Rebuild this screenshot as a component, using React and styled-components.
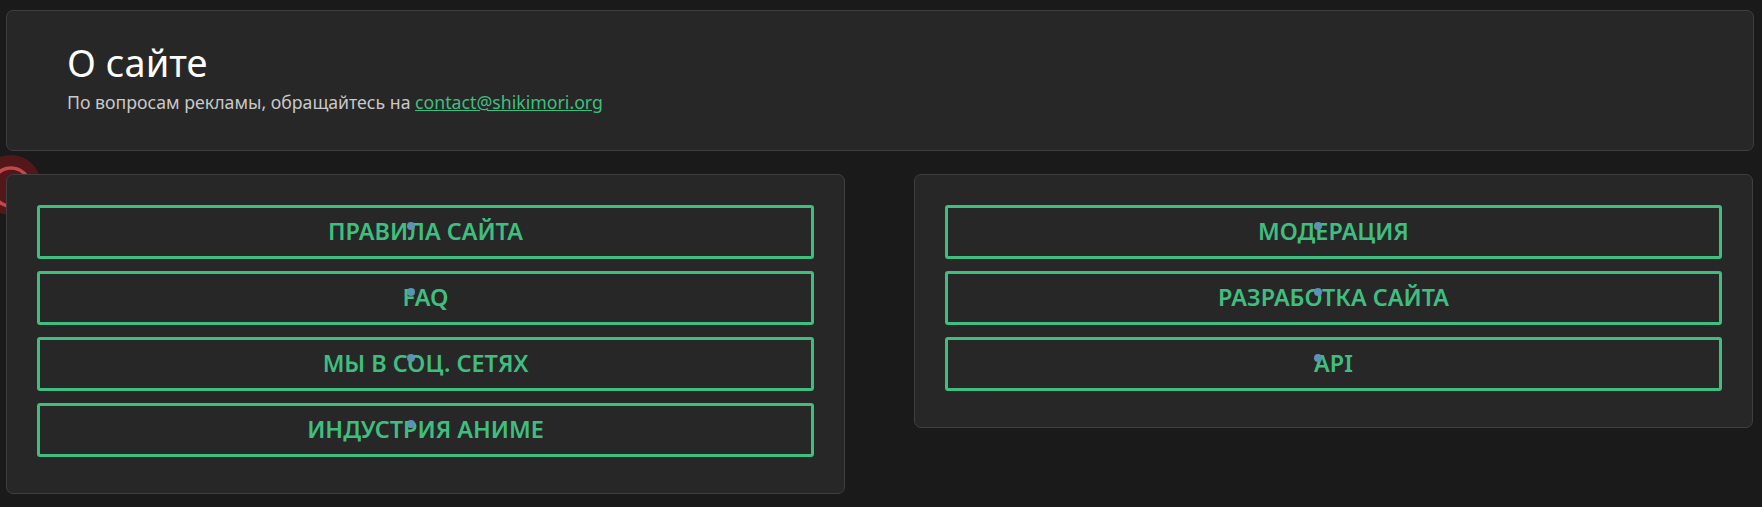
import styled, { createGlobalStyle } from "styled-components";

const GlobalStyle = createGlobalStyle`
  html, body {
    margin: 0;
    padding: 0;
    height: 100%;
    background-color: #1a1a1a;
    overflow: hidden;
  }
  body {
    font-family: "Noto Sans", "Open Sans", sans-serif;
  }
`;

const Page = styled.div`
  position: relative;
  width: 1762px;
  height: 507px;
  padding: 10px 8px 0 6px;
  box-sizing: border-box;
`;

const Card = styled.section`
  position: relative;
  box-sizing: border-box;
  background-color: #272727;
  border: 1px solid #3f3f3f;
  border-radius: 7px;
`;

const Intro = styled(Card)`
  height: 141px;
  padding: 27px 60px;
`;

const Title = styled.h1`
  margin: 0;
  color: #ffffff;
  font-size: 38px;
  font-weight: 400;
  line-height: 48px;
`;

const Note = styled.p`
  margin: 4px 0 0;
  color: #c8c8c8;
  font-size: 17.7px;
  line-height: 24px;
`;

const Mail = styled.a`
  color: #3fbf7f;
  text-decoration: underline;
`;

const Columns = styled.div`
  display: grid;
  grid-template-columns: 839px 839px;
  column-gap: 69px;
  align-items: start;
  margin-top: 23px;
`;

const LinkCard = styled(Card)`
  display: flex;
  flex-direction: column;
  gap: 12px;
  padding: 30px 30px 36px;
`;

const LinkButton = styled.a`
  position: relative;
  display: flex;
  align-items: center;
  justify-content: center;
  height: 54px;
  padding-bottom: 2px;
  box-sizing: border-box;
  border: 3px solid #3fbf7f;
  border-radius: 3px;
  color: #3fbf7f;
  font-size: 23.4px;
  font-weight: 600;
  text-decoration: none;
`;

const Dot = styled.span`
  position: absolute;
  left: ${(props) => props.$left}px;
  top: 14px;
  width: 8px;
  height: 8px;
  border-radius: 50%;
  background-color: #5b93b5;
`;

const Badge = styled.svg`
  position: absolute;
  left: 0;
  top: 155px;
`;

const left = ["ПРАВИЛА САЙТА", "FAQ", "МЫ В СОЦ. СЕТЯХ", "ИНДУСТРИЯ АНИМЕ"];
const right = ["МОДЕРАЦИЯ", "РАЗРАБОТКА САЙТА", "API"];

const App = () => {
  return (
    <Page>
      <GlobalStyle />
      <Badge width="44" height="62" viewBox="0 0 44 62">
        <circle cx="11" cy="30" r="30" fill="#521719" />
        <circle cx="11" cy="32" r="19" fill="none" stroke="#c4474b" strokeWidth="3.5" />
      </Badge>
      <Intro>
        <Title>О сайте</Title>
        <Note>
          По вопросам рекламы, обращайтесь на <Mail href="#">contact@shikimori.org</Mail>
        </Note>
      </Intro>
      <Columns>
        <LinkCard>
          {left.map((item) => (
            <LinkButton key={item} href="#">
              {item}
              <Dot $left={367} />
            </LinkButton>
          ))}
        </LinkCard>
        <LinkCard>
          {right.map((item) => (
            <LinkButton key={item} href="#">
              {item}
              <Dot $left={366} />
            </LinkButton>
          ))}
        </LinkCard>
      </Columns>
    </Page>
  );
};

export default App;
